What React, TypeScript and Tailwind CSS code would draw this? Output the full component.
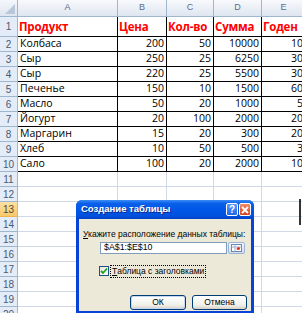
import React from "react";

const rows: (string | number)[][] = [
  ["Продукт", "Цена", "Кол-во", "Сумма", "Годен"],
  ["Колбаса", 200, 50, 10000, 10],
  ["Сыр", 250, 25, 6250, 30],
  ["Сыр", 220, 25, 5500, 30],
  ["Печенье", 150, 10, 1500, 60],
  ["Масло", 50, 20, 1000, 5],
  ["Йогурт", 20, 100, 2000, 20],
  ["Маргарин", 15, 20, 300, 20],
  ["Хлеб", 10, 50, 500, 3],
  ["Сало", 100, 20, 2000, 10],
];

const colW = ["w-[100px]", "w-[49px]", "w-[47px]", "w-[48px]", "w-[44px]"];
const letters = ["A", "B", "C", "D", "E"];

const font = { fontFamily: "'Open Sans', 'Noto Sans', sans-serif" };
const uiFont = { fontFamily: "'Liberation Sans', Arial, sans-serif" };

function HeaderRow() {
  return (
    <div className="flex h-[17px]">
      <div className="w-[18px] shrink-0 border-r border-b border-[#9eb6ce] bg-[linear-gradient(to_bottom,#f4f7fb,#dfe6f0)] relative">
        <div className="absolute right-[2px] bottom-[2px] w-0 h-0 border-l-[10px] border-l-transparent border-b-[10px] border-b-[#b8c8da]" />
      </div>
      {letters.map((l, i) => (
        <div
          key={l}
          className={`${colW[i]} shrink-0 border-r border-b border-[#9eb6ce] bg-[linear-gradient(to_bottom,#f7f9fc,#dfe6f0)] flex items-center justify-center text-[9px] text-[#5a6d90]`}
          style={uiFont}
        >
          {l}
        </div>
      ))}
      <div className="flex-1 border-b border-[#9eb6ce] bg-[linear-gradient(to_bottom,#f7f9fc,#dfe6f0)]" />
    </div>
  );
}

function RowNum({ n, active }: { n: number; active?: boolean }) {
  return (
    <div
      className={`w-[18px] shrink-0 border-r border-b flex items-center justify-center text-[10px] ${
        active
          ? "bg-[linear-gradient(to_bottom,#fbe1a4,#f7c96b)] border-[#f0b44a] text-[#5a4a2a]"
          : "bg-[#e4ecf7] border-[#9eb6ce] text-[#4b5a70]"
      }`}
      style={uiFont}
    >
      {n}
    </div>
  );
}

function DataRow({ r, idx }: { r: (string | number)[]; idx: number }) {
  const head = idx === 0;
  return (
    <div className={`flex ${head ? "h-[20px]" : "h-[15px]"}`}>
      <RowNum n={idx + 1} />
      {r.map((v, i) => (
        <div
          key={i}
          className={`${colW[i]} shrink-0 border-r border-b border-black flex items-center whitespace-nowrap ${
            head
              ? "text-[11.5px] font-bold text-[#ff0000] pl-[1px] pt-[1px] tracking-[-0.2px]"
              : i === 0
              ? "text-[10.5px] text-black pl-[2px]"
              : "text-[10.5px] text-black justify-end pr-[2px]"
          }`}
          style={font}
        >
          {v}
        </div>
      ))}
      <div className="flex-1 border-b border-[#d0d7e5]" />
    </div>
  );
}

function EmptyRow({ n }: { n: number }) {
  return (
    <div className="flex h-[15px]">
      <RowNum n={n} active={n === 13} />
      {colW.map((w, i) => (
        <div key={i} className={`${w} shrink-0 border-r border-b border-[#d0d7e5]`} />
      ))}
      <div className="flex-1 border-b border-[#d0d7e5]" />
    </div>
  );
}

function Dialog() {
  return (
    <div
      className="absolute left-[76px] top-[200px] w-[178px] h-[113px] flex flex-col rounded-t-[6px] overflow-hidden bg-[#0842d6]"
      style={uiFont}
    >
      <div className="h-[19px] shrink-0 flex items-center pl-[5px] pr-[3px] bg-[linear-gradient(to_bottom,#3d8cf5_0%,#0a60ea_18%,#0056e6_55%,#0050dd_85%,#0042c8_100%)]">
        <span className="text-white font-bold text-[9.5px] [text-shadow:1px_1px_0_#0a2a8a]">
          Создание таблицы
        </span>
        <div className="ml-auto flex gap-[1px]">
          <div className="w-[12px] h-[13px] rounded-[2px] border border-white bg-[linear-gradient(to_bottom,#5c9bff,#2266e8)] flex items-center justify-center text-white text-[10px] font-bold leading-none">
            ?
          </div>
          <div className="w-[12px] h-[13px] rounded-[2px] border border-white bg-[linear-gradient(to_bottom,#f08a68,#d8411c)] flex items-center justify-center">
            <svg width="8" height="8" viewBox="0 0 8 8">
              <path d="M1 1L7 7M7 1L1 7" stroke="white" strokeWidth="1.8" />
            </svg>
          </div>
        </div>
      </div>
      <div className="flex-1 mx-[3px] mb-[2px] bg-[#ece9d8] relative pl-[4px] pt-[11px]">
        <div className="text-[8.5px] text-black leading-none whitespace-nowrap">
          <span className="underline">У</span>кажите расположение данных таблицы:
        </div>
        <div className="flex mt-[3px] ml-[17px] h-[12px]">
          <div className="w-[127px] h-[12px] bg-white border border-[#7f9db9] text-[8.8px] leading-none flex items-center pl-[3px] text-black">
            $A$1:$E$10
          </div>
          <div className="w-[17px] h-[12px] ml-[1px] border border-[#9bb3d4] rounded-[2px] bg-[linear-gradient(to_bottom,#f6f8fc,#d3ddee)] flex items-center justify-center">
            <svg width="11" height="8" viewBox="0 0 11 8">
              <rect x="0.5" y="0.5" width="10" height="7" fill="#fff" stroke="#6b84b0" />
              <path d="M0.5 3H10.5M4 0.5V7.5" stroke="#9fb0cc" />
              <path d="M5 5L8 3L8 6Z" fill="#e03020" />
              <rect x="6" y="3.5" width="3" height="2" fill="#e03020" />
            </svg>
          </div>
        </div>
        <div className="flex items-center mt-[11px] ml-[16px] h-[13px]">
          <div className="w-[10px] h-[10px] border border-[#1c5180] bg-[linear-gradient(to_bottom_right,#e6e6e0,#ffffff)] flex items-center justify-center">
            <svg width="8" height="8" viewBox="0 0 8 8">
              <path d="M1 4L3 6L7 1.5" stroke="#21a121" strokeWidth="1.8" fill="none" />
            </svg>
          </div>
          <div className="ml-[1px] border border-dotted border-black px-[1px] h-[13px] flex items-center text-[8.5px] leading-none whitespace-nowrap text-black">
            <span className="underline">Т</span>аблица с заголовками
          </div>
        </div>
        <div className="flex mt-[17px] ml-[47px] gap-[6px]">
          <div className="w-[56px] h-[15px] rounded-[3px] border border-[#003c74] bg-[linear-gradient(to_bottom,#ffffff,#f0f0ea_70%,#d6d0c5)] flex items-center justify-center text-[8.5px] text-black shadow-[inset_0_0_0_1px_#c3d7f5]">
            ОК
          </div>
          <div className="w-[55px] h-[15px] rounded-[3px] border border-[#003c74] bg-[linear-gradient(to_bottom,#ffffff,#f0f0ea_70%,#d6d0c5)] flex items-center justify-center text-[8.5px] text-black">
            Отмена
          </div>
        </div>
      </div>
    </div>
  );
}

export default function App() {
  return (
    <div className="w-[302px] h-[313px] overflow-hidden bg-white relative">
      <HeaderRow />
      {rows.map((r, i) => (
        <DataRow key={i} r={r} idx={i} />
      ))}
      {[11, 12, 13, 14, 15, 16, 17, 18, 19, 20, 21].map((n) => (
        <EmptyRow key={n} n={n} />
      ))}
      <Dialog />
      <div className="absolute left-[299px] top-[199px] w-[2px] h-[26px] bg-[#333]" />
    </div>
  );
}
